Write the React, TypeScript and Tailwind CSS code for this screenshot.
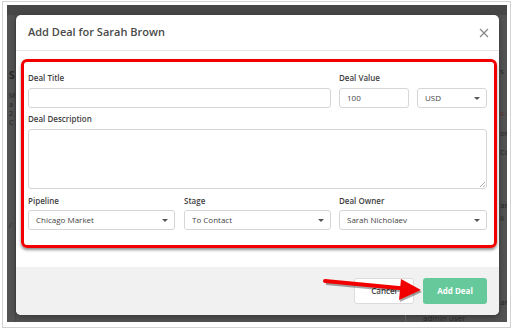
function Caret() {
  return (
    <svg width="6" height="3" viewBox="0 0 6 3" className="shrink-0">
      <path d="M0 0h6L3 3z" fill="#555" />
    </svg>
  );
}

function Field({ label, className }: { label: string; className?: string }) {
  return <p className={`h-[14px] leading-[14px] text-[8px] font-semibold text-[#3f3f3f] ${className ?? ""}`}>{label}</p>;
}

function Select({ value, width }: { value: string; width: string }) {
  return (
    <div className={`${width} h-[20px] border border-[#d6d6d6] rounded-[3px] bg-white flex items-center justify-between pl-[7px] pr-[6px]`}>
      <span className="text-[8px] text-[#444]">{value}</span>
      <Caret />
    </div>
  );
}

export default function App() {
  return (
    <div className="w-[514px] h-[330px] bg-white overflow-hidden relative pt-[1px] pl-[2px]" style={{ fontFamily: '"Open Sans", "Liberation Sans", sans-serif' }}>
      {/* screenshot frame */}
      <div className="w-[509px] h-[327px] border border-[#d2d2d2] pt-[3px] pl-[4px]">
        <div className="w-[500px] h-[317px] bg-[#535353] flex flex-col overflow-hidden">
          <div className="h-[10px] shrink-0 bg-[#474747]" />
          <div className="flex flex-1">
            {/* dimmed page, left edge */}
            <div className="w-[9px] shrink-0 overflow-hidden flex flex-col pl-[2px] text-[#262626] border-r border-[#4a4a4a]">
              <span className="mt-[53px] text-[10px] leading-[14px] font-bold">S</span>
              <span className="mt-[9px] text-[7px] leading-[9px] whitespace-pre">{"M\na\n2\nC"}</span>
              <span className="mt-[94px] text-[7px] leading-[9px]">/</span>
            </div>

            <div className="w-[483px] shrink-0 flex flex-col">
              {/* modal */}
              <div className="w-[483px] h-[300px] shrink-0 bg-white rounded-[5px] flex flex-col overflow-hidden shadow-[0_2px_6px_rgba(0,0,0,0.35)]">
                <div className="h-[36px] shrink-0 border-b border-[#e6e6e6] flex items-center justify-between pl-[12px] pr-[10px]">
                  <h2 className="text-[11px] font-semibold text-[#4a4a4a]">Add Deal for Sarah Brown</h2>
                  <svg width="10" height="10" viewBox="0 0 10 10">
                    <path d="M1 1l8 8M9 1l-8 8" stroke="#8a8a8a" strokeWidth="1.3" />
                  </svg>
                </div>

                <div className="h-[216px] shrink-0 pt-[8px] pl-[5px]">
                  <div className="w-[476px] h-[189px] border-[3px] border-[#f20000] rounded-[6px] shadow-[0_2px_3px_rgba(0,0,0,0.45)] pt-[9px] pl-[4px] pr-[7px]">
                    <div className="flex gap-[8px]">
                      <div className="w-[303px]">
                        <Field label="Deal Title" />
                        <div className="mt-[3px] h-[20px] border border-[#d6d6d6] rounded-[3px]" />
                      </div>
                      <div className="w-[70px]">
                        <Field label="Deal Value" />
                        <div className="mt-[3px] h-[20px] border border-[#d6d6d6] rounded-[3px] flex items-center pl-[7px] text-[8px] text-[#444]">100</div>
                      </div>
                      <div className="w-[70px] pt-[17px]">
                        <Select value="USD" width="w-[70px]" />
                      </div>
                    </div>
                    <Field label="Deal Description" className="mt-[4px]" />
                    <div className="mt-[3px] h-[60px] border border-[#d6d6d6] rounded-[3px] flex items-end justify-end p-[1px]">
                      <svg width="6" height="6" viewBox="0 0 6 6">
                        <path d="M6 1L1 6M6 4L4 6" stroke="#999" strokeWidth="0.8" />
                      </svg>
                    </div>
                    <div className="flex mt-[5px]">
                      <div className="w-[147px]">
                        <Field label="Pipeline" />
                        <div className="mt-[2px]"><Select value="Chicago Market" width="w-[147px]" /></div>
                      </div>
                      <div className="w-[147px] ml-[9px]">
                        <Field label="Stage" />
                        <div className="mt-[2px]"><Select value="To Contact" width="w-[147px]" /></div>
                      </div>
                      <div className="w-[148px] ml-[8px]">
                        <Field label="Deal Owner" />
                        <div className="mt-[2px]"><Select value="Sarah Nicholaev" width="w-[148px]" /></div>
                      </div>
                    </div>
                  </div>
                </div>

                <div className="flex-1 bg-[#f1f1f1] flex items-center justify-end gap-[9px] pr-[12px]">
                  <button className="w-[60px] h-[26px] bg-white border border-[#dcdcdc] rounded-[3px] text-[8px] font-semibold text-[#444]">Cancel</button>
                  <button className="w-[64px] h-[26px] bg-[#66c99b] rounded-[3px] text-[8px] font-bold text-white">Add Deal</button>
                </div>
              </div>
              {/* dimmed page below the modal */}
              <div className="flex-1 overflow-hidden flex">
                <div className="ml-[389px] w-px bg-[#5e5e5e]" />
                <span className="ml-[17px] text-[8px] leading-[8px] mt-[-1px] text-[#262626]">admin user</span>
              </div>
            </div>

            {/* dimmed page, right edge */}
            <div className="flex-1 overflow-hidden flex flex-col pl-[1px] text-[8px] leading-[10px] text-[#262626] whitespace-nowrap">
              <span className="mt-[51px]">s</span>
              <span className="mt-[32px] text-[#5a2a2a]">s a</span>
              <span className="mt-[10px]">on</span>
              <span className="mt-[9px]">Co</span>
              <span className="mt-[43px]">am</span>
              <span className="mt-[3px]">li</span>
              <span className="mt-[74px]">ann</span>
            </div>
          </div>
        </div>
      </div>

      {/* annotation arrow */}
      <svg className="absolute left-0 top-0 pointer-events-none" width="514" height="330" viewBox="0 0 514 330">
        <g transform="translate(1 2)" fill="rgba(0,0,0,0.35)" stroke="rgba(0,0,0,0.35)">
          <path d="M325 281L404 288.5" strokeWidth="4" />
          <path d="M401 279L421 290L399 300z" stroke="none" />
        </g>
        <path d="M325 281L404 288.5" stroke="#f20000" strokeWidth="4" strokeLinecap="round" />
        <path d="M401 279L421 290L399 300z" fill="#f20000" />
      </svg>
    </div>
  );
}
